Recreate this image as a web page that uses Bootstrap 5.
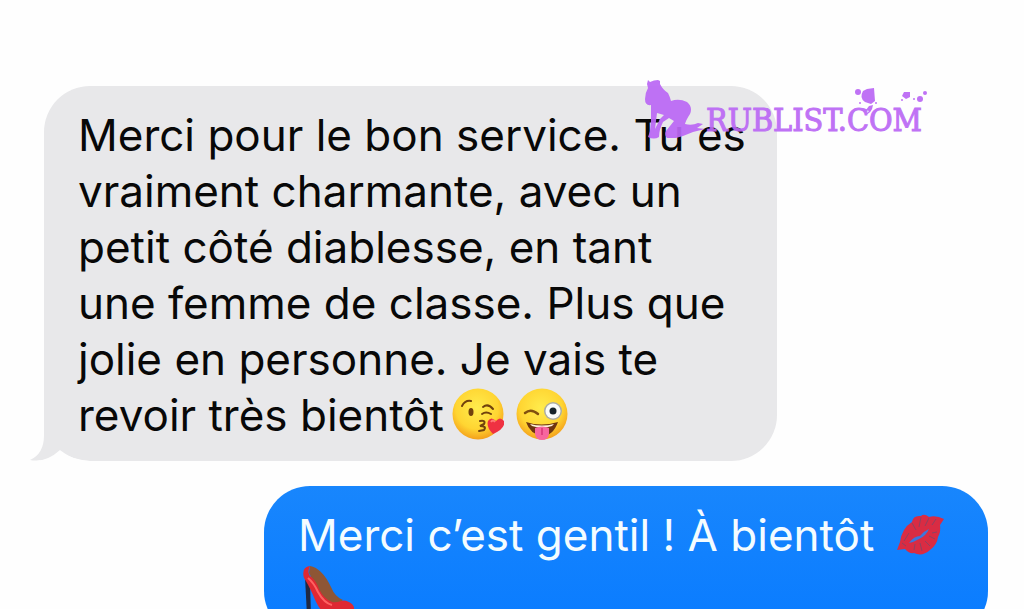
<!DOCTYPE html>
<html lang="fr">
<head>
<meta charset="utf-8">
<meta name="viewport" content="width=device-width, initial-scale=1">
<title>Messages</title>
<link href="https://cdn.jsdelivr.net/npm/bootstrap@5.3.0/dist/css/bootstrap.min.css" rel="stylesheet">
<script src="https://cdn.jsdelivr.net/npm/bootstrap@5.3.0/dist/js/bootstrap.bundle.min.js" defer></script>
<style>
  body { background: #fefefe; }
  .thread { padding: 86px 36px 0 44px; gap: 25px; font-family: Inter, "Liberation Sans", sans-serif; font-size: 44px; line-height: 56px; }
  .bubble { width: 100%; padding: 21px 34px 18px; border-radius: 46px; }
  .bubble p { white-space: nowrap; }
  .received { max-width: 733px; background: #e8e8ea; color: #080808; }
  .sent { max-width: 724px; background: linear-gradient(#1886fd, #0a7cff 90%); color: #f4fcff; }
  .tail { left: -16px; bottom: 0; }
  .emoji { width: 52px; height: 52px; vertical-align: -9px; }
  .emoji + .emoji { margin-left: 12px; }
  .lips { margin-left: 8px; }
  .watermark { left: 640px; top: 78px; color: #bb68f5; opacity: .93; }
  .watermark-name { font-family: "DejaVu Serif Condensed", "DejaVu Serif", serif; font-size: 32px; line-height: 40px; -webkit-text-stroke: 1px currentColor; }
  .petals { top: -13px; left: 145px; }
</style>
</head>
<body class="vh-100 overflow-hidden position-relative">
<main class="thread d-flex flex-column">
  <article class="bubble received position-relative">
    <svg class="tail position-absolute" width="64" height="46" viewBox="0 0 64 46" aria-hidden="true"><path fill="#e8e8ea" d="M16 0V20Q16 39 2 45Q18 48 32 35L64 46V0Z"/><path fill="#fefefe" d="M2 46Q22 47 32 36Q42 44 62 46Z"/></svg>
    <p class="mb-0 position-relative">Merci pour le bon service. Tu es<br>vraiment charmante, avec un<br>petit côté diablesse, en tant<br>une femme de classe. Plus que<br>jolie en personne. Je vais te<br>revoir très bientôt<svg class="emoji ms-2" viewBox="0 0 52 52" role="img" aria-label="Bisou">
      <defs><radialGradient id="face" cx=".48" cy=".38" r=".64"><stop stop-color="#ffec4d"/><stop offset=".65" stop-color="#ffd532"/><stop offset="1" stop-color="#f39b19"/></radialGradient></defs>
      <circle cx="26" cy="26" r="25.500" fill="url(#face)"/>
      <path fill="none" stroke="#71420d" stroke-linecap="round" stroke-width="2" d="M10 18Q13 12 19 13M31 19Q36 15 41 21M30 26Q34 23 39 26M28 33Q34 32 32 36L28 38Q35 38 32 42L27 43"/><ellipse cx="19" cy="24" rx="2.500" ry="4" fill="#71420d"/>
      <path d="M41 46Q34 39 36 33Q39 28 44 33Q48 28 52 33Q54 40 41 46Z" fill="#ef3142"/><path d="M39 34q2-3 4 0" stroke="#ff7a75" stroke-width="2" fill="none"/>
    </svg><svg class="emoji" viewBox="0 0 52 52" role="img" aria-label="Clin d’œil, langue tirée">
      <circle cx="26" cy="26" r="25.500" fill="url(#face)"/><path d="M9 25Q15 20 22 26" fill="none" stroke="#81500f" stroke-width="2.500" stroke-linecap="round"/>
      <circle cx="37" cy="23" r="9" fill="#acada4"/><circle cx="37" cy="23" r="7.500" fill="#fafcf9"/><circle cx="37" cy="23" r="3.500" fill="#17242a"/>
      <path d="M10 34Q25 39 42 34Q37 48 26 48Q14 46 10 34Z" fill="#6e3510"/><path d="M14 36Q26 39 38 36L36 38Q26 41 16 38Z" fill="#fff4dd"/>
      <path d="M19 40Q26 37 33 40V46Q32 52 26 52Q20 52 19 46Z" fill="#f7669f"/><path d="M26 40V47" stroke="#d73576" stroke-width="1.500"/>
    </svg></p>
  </article>
  <article class="bubble sent ms-auto">
    <p class="mb-0">Merci c’est gentil ! À bientôt <svg class="emoji lips" viewBox="0 0 52 52" role="img" aria-label="Marque de baiser">
      <path d="M2 42L5 34Q7 20 17 14Q18 7 26 8Q29 5 34 9Q41 7 49 11L45 17Q46 24 43 29Q42 37 35 42Q27 49 19 45Q14 46 10 41Z" fill="#d92c43"/>
      <path d="M14 35Q19 28 25 28Q29 23 34 21Q31 28 24 31Q19 34 14 35Z" fill="#3d76dc"/>
      <path d="M9 33L14 25M11 38L7 35M17 15L21 22M26 9L24 19M34 10L30 18M41 11L37 17M42 24L37 25M40 31L34 28M35 38L30 33M27 43L25 35M19 42L20 36" stroke="#8d4261" stroke-width="1" fill="none"/>
    </svg><br><svg class="emoji ms-1" viewBox="0 0 52 52" role="img" aria-label="Escarpin">
      <path d="M3 13L8 18L9 52H5Z" fill="#202943"/>
      <path d="M8 2Q20 4 29 23Q33 33 41 36L35 41Q24 39 18 30L7 9Z" fill="#8e5635"/>
      <path d="M8 2Q-1 3 2 14Q6 20 11 31Q18 49 27 52H52Q55 46 50 40Q44 35 39 37Q34 39 30 38Q22 35 17 25Q14 16 8 12Q5 8 8 2Z" fill="#df2832"/>
      <path d="M6 14Q12 19 16 28Q22 39 30 41" stroke="#ff6261" stroke-width="2" fill="none"/>
    </svg></p>
  </article>
</main>
<div class="watermark position-absolute d-flex align-items-end">
  <svg width="66" height="62" viewBox="0 0 66 62" fill="currentColor" aria-hidden="true"><path d="M8 2L10 4Q14 2 18 2L20 3L20 6Q23 12 28 15Q30 19 31 23Q39 20 47 24Q53 29 50 36Q46 42 45 46Q52 48 58 45L63 46L57 50L65 51L53 54Q44 58 36 60L27 60Q24 57 26 53L34 43L29 40L23 44Q19 52 19 59Q14 62 8 59L10 53L11 43L11 27Q5 28 5 21Q5 15 8 10L7 6ZM17 35L15 51L20 41L24 37Z"/></svg>
  <div class="position-relative"><span class="watermark-name">RUBLIST.COM</span>
  <svg class="petals position-absolute" width="76" height="34" viewBox="0 0 76 34" fill="currentColor" aria-hidden="true"><path d="M12 4L16 2L23 1L24 14L20 17L14 15Q8 11 12 4ZM53 5L59 5L59 10L55 12L51 9Z"/><circle cx="7" cy="5" r="3"/><circle cx="9" cy="16" r="1"/><circle cx="25" cy="16" r="1"/><circle cx="51" cy="13" r="1"/><circle cx="63" cy="12" r="1"/><circle cx="69" cy="12" r="3"/><circle cx="74" cy="6" r="2"/><path d="M18 19L22 18Q21 26 14 28L18 24L15 23Z"/></svg></div>
</div>
</body>
</html>
